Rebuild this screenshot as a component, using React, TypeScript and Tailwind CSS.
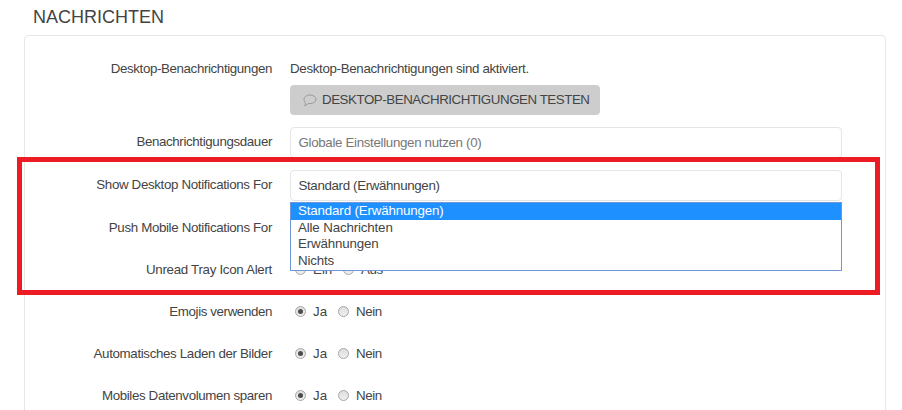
import type { ReactNode } from "react";

function Label({ children, tracking }: { children: ReactNode; tracking: string }) {
  return (
    <div className="w-[248px] shrink-0 text-right leading-5">
      <span className={tracking}>{children}</span>
    </div>
  );
}

function Radio({ checked = false }: { checked?: boolean }) {
  return (
    <span className="mb-px flex h-[11px] w-[11px] shrink-0 items-center justify-center rounded-full border border-[#a6a6a6] bg-gradient-to-b from-[#dedede] to-[#efefef]">
      {checked && <span className="h-[5px] w-[5px] rounded-full bg-[#4c4c4c]" />}
    </span>
  );
}

function RadioRow({ label, tracking, first, second, checked }: { label: string; tracking: string; first: string; second: string; checked: boolean }) {
  return (
    <div className="flex h-5 gap-[18px]">
      <Label tracking={tracking}>{label}</Label>
      <div className="flex items-center pl-[5px]">
        <Radio checked={checked} />
        <span className={checked ? "ml-[7px] w-[25px]" : "ml-[7px] w-[30px]"}>{first}</span>
        <Radio />
        <span className="ml-[7px] tracking-[-0.4px]">{second}</span>
      </div>
    </div>
  );
}

export default function App() {
  return (
    <div className="relative h-[410px] w-[902px] overflow-hidden bg-white font-['Liberation_Sans',Arial,sans-serif] text-[13.33px] text-[#444]">
      <h2 className="pl-[33px] pt-[7px] text-[18px] leading-5">NACHRICHTEN</h2>
      <section className="ml-6 mt-2 h-[400px] w-[862px] rounded-[4px] border border-[#e7e7e7] pt-[23px]">
        <div className="-ml-px flex flex-col">
          <div className="flex gap-[18px]">
            <Label tracking="tracking-[-0.38px]">Desktop-Benachrichtigungen</Label>
            <div>
              <p className="leading-5 tracking-[-0.33px]">Desktop-Benachrichtigungen sind aktiviert.</p>
              <button className="mt-1.5 flex h-[30px] w-[310px] items-center rounded-[4px] bg-[#cdcdcd] pl-[13px]">
                <svg width="14" height="13" viewBox="0 0 14 13" fill="none" stroke="#999" strokeWidth="1">
                  <path d="M7 1c3.500 0 6 1.900 6 4.300s-2.500 4.300-6 4.300c-.6 0-1.200 0-1.700-.1C4.300 10.600 3 11.400 1.500 11.600c.7-.8 1.100-1.600 1.100-2.600C1.600 8.100 1 6.800 1 5.300C1 2.900 3.500 1 7 1Z" />
                </svg>
                <span className="ml-[5px] whitespace-nowrap tracking-[-0.45px]">DESKTOP-BENACHRICHTIGUNGEN TESTEN</span>
              </button>
            </div>
          </div>
          <div className="mt-3 flex h-[31px] gap-[18px]">
            <div className="pt-[5px]"><Label tracking="tracking-[-0.37px]">Benachrichtigungsdauer</Label></div>
            <div className="flex w-[552px] items-center rounded-[4px] border border-[#e5e5e5] pl-[7.5px] tracking-[-0.33px] text-[#777]">Globale Einstellungen nutzen (0)</div>
          </div>
          <div className="mt-3 flex h-[31px] gap-[18px]">
            <div className="pt-[5px]"><Label tracking="tracking-[-0.34px]">Show Desktop Notifications For</Label></div>
            <div className="relative flex w-[552px] items-center rounded-[4px] border border-[#e5e5e5] pl-[7.5px] tracking-[-0.36px]">
              Standard (Erwähnungen)
              <ul className="absolute -left-px top-[31px] z-10 h-[69px] w-[552px] border border-[#7096d8] bg-white leading-[16.6px] tracking-[-0.15px]">
                <li className="h-[17px] bg-[#1e90ff] pl-[7px] text-white">Standard (Erwähnungen)</li>
                <li className="h-4 pl-[7px]">Alle Nachrichten</li>
                <li className="h-[17px] pl-[7px]">Erwähnungen</li>
                <li className="h-4 pl-[7px]">Nichts</li>
              </ul>
            </div>
          </div>
          <div className="mt-3 flex h-[31px] gap-[18px] pt-[5px]">
            <Label tracking="tracking-[-0.35px]">Push Mobile Notifications For</Label>
          </div>
          <div className="mt-4 flex flex-col gap-[22px]">
            <RadioRow label="Unread Tray Icon Alert" tracking="tracking-[-0.3px]" first="Ein" second="Aus" checked={false} />
            <RadioRow label="Emojis verwenden" tracking="tracking-[-0.39px]" first="Ja" second="Nein" checked />
            <RadioRow label="Automatisches Laden der Bilder" tracking="tracking-[-0.35px]" first="Ja" second="Nein" checked />
            <RadioRow label="Mobiles Datenvolumen sparen" tracking="tracking-[-0.37px]" first="Ja" second="Nein" checked />
          </div>
        </div>
      </section>
      <div className="pointer-events-none absolute left-[17px] top-[157px] z-20 h-[138px] w-[863px] border-[5px] border-[#ed1c24]" />
    </div>
  );
}
